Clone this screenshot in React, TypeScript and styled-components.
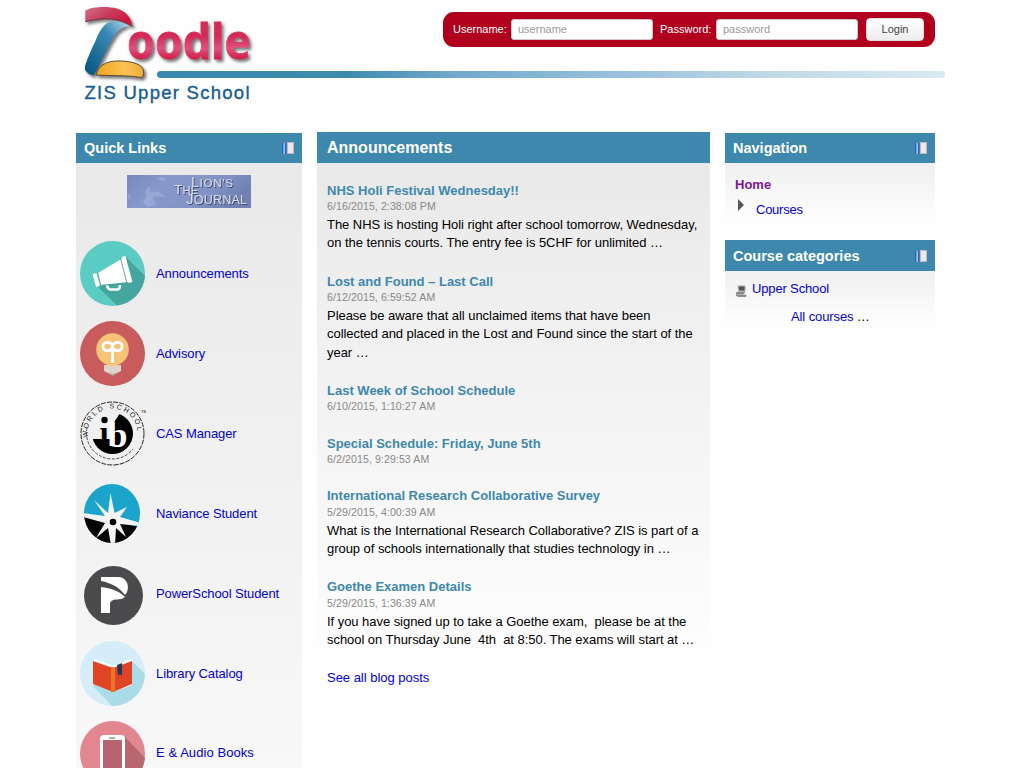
import React from "react";
import styled, { createGlobalStyle } from "styled-components";

const GlobalStyle = createGlobalStyle`
  * { box-sizing: border-box; }
  html, body { margin: 0; height: 768px; overflow: hidden; }
  body {
    background: #fefefe;
    color: #000;
    font: 13px/18.2px "Liberation Sans", Arial, sans-serif;
  }
`;

const Page = styled.div`
  width: 869px;
  height: 768px;
  margin-left: 76px;
  overflow: hidden;
`;

const Header = styled.header`
  display: grid;
  grid-template-columns: 81px 286px 492px 10px;
  grid-template-rows: 71px 7px 54px;
  height: 132px;
`;

const LogoArt = styled.svg`
  grid-area: 1 / 1 / 4 / 3;
  width: 200px;
  height: 110px;
  z-index: 1;
`;

const Rule = styled.div`
  grid-area: 2 / 2 / 3 / 5;
  border-radius: 4px;
  background: linear-gradient(90deg, #3a88ae 0%, #3f8bb0 24%, #70a9cd 38%, #a0c4df 62%, #bdd8e5 76%, #dae9f1 100%);
`;

const LoginBar = styled.form`
  grid-area: 1 / 3 / 2 / 4;
  display: flex;
  align-items: center;
  height: 35px;
  margin-top: 12px;
  padding: 0 11px 0 10px;
  border-radius: 11px;
  background: #b1001e;
  color: #fff;
  font-size: 11px;
`;

const FieldLabel = styled.label<{ $width: number }>`
  width: ${(p) => p.$width}px;
  white-space: nowrap;
`;

const Field = styled.input`
  width: 142px;
  height: 21px;
  margin-right: 7px;
  padding: 0 6px 1px;
  border: 1px solid #d9c5c9;
  border-radius: 3px;
  background: #fff;
  font: 11px "Liberation Sans", Arial, sans-serif;
  &::placeholder { color: #999; }
`;

const LoginButton = styled.button`
  width: 58px;
  height: 23px;
  margin-left: 1px;
  padding: 0 0 1px;
  border: 1px solid #ddd;
  border-radius: 4px;
  background: linear-gradient(#fff, #ececec);
  color: #444;
  font: 11px "Liberation Sans", Arial, sans-serif;
`;

const Columns = styled.div`
  display: grid;
  grid-template-columns: 226px 393px 210px;
  column-gap: 15px;
  align-items: start;
`;

const Side = styled.aside`
  padding-top: 1px;
`;

const Block = styled.section<{ $height: number; $from: string; $to: string }>`
  height: ${(p) => p.$height}px;
  margin-bottom: 17px;
  background: linear-gradient(${(p) => p.$from} 30px, ${(p) => p.$to});
`;

const BlockHead = styled.h2<{ $height: number; $large?: boolean }>`
  display: flex;
  align-items: center;
  justify-content: space-between;
  height: ${(p) => p.$height}px;
  margin: 0;
  padding: 0 7px 0 ${(p) => (p.$large ? 10 : 8)}px;
  background: #3e88ae;
  color: #fff;
  font-size: ${(p) => (p.$large ? "16px" : "14.5px")};
  line-height: 20px;
`;

const DockArt = styled.svg`
  width: 13px;
  height: 14px;
`;

const Journal = styled.svg`
  display: block;
  width: 124px;
  height: 33px;
  margin: 12px 0 26px 51px;
`;

const Link = styled.a`
  color: #0000dd;
  letter-spacing: -0.02px;
`;

const QuickRow = styled.div`
  display: flex;
  align-items: center;
  height: 80px;
  padding-left: 4px;
  ${Link} { letter-spacing: -0.1px; }
  &:last-child ${Link} { margin-bottom: 2px; letter-spacing: 0.07px; }
`;

const QuickArt = styled.svg`
  width: 66px;
  height: 66px;
  margin-right: 10px;
`;

const Posts = styled.div`
  padding: 19px 0 0 10px;
`;

const Post = styled.article`
  margin-bottom: 20px;
`;

const PostTitle = styled.h3`
  margin: 0;
  color: #3e88ae;
  font-size: 13px;
  line-height: 18.2px;
`;

const PostDate = styled.div`
  color: #888;
  font-size: 10.6px;
  line-height: 12.4px;
  padding-bottom: 2px;
  letter-spacing: 0.08px;
`;

const PostText = styled.p`
  margin: 0;
  padding-top: 1.5px;
  padding-bottom: 0.5px;
  letter-spacing: -0.045px;
  white-space: pre;
`;

const NavBody = styled.div`
  padding: 13px 0 0 10px;
`;

const Home = styled.a`
  display: block;
  color: #7e1790;
  font-weight: bold;
`;

const NavItem = styled.div`
  display: flex;
  align-items: flex-start;
  gap: 12px;
  padding: 7px 0 0 3px;
  ${Link} { letter-spacing: -0.25px; }
`;

const Arrow = styled.svg`
  width: 6px;
  height: 12px;
  margin-top: -2px;
`;

const Category = styled.div`
  display: flex;
  align-items: center;
  gap: 5px;
  padding: 9px 0 0 10px;
  ${Link} { letter-spacing: -0.15px; }
`;

const CategoryArt = styled.svg`
  width: 12px;
  height: 12px;
  margin-top: 4px;
`;

const AllCourses = styled.div`
  padding: 10px 0 0 66px;
  letter-spacing: -0.4px;
  ${Link} { letter-spacing: -0.1px; }
`;

function Logo() {
  return (
    <LogoArt viewBox="6 0 200 110">
      <defs>
        <linearGradient id="zr" x2="1" y2=".6"><stop offset="0" stopColor="#d5708a" /><stop offset=".5" stopColor="#c83d5d" /><stop offset="1" stopColor="#d3123d" /></linearGradient>
        <linearGradient id="zb" x1="1" x2="0" y2="1"><stop offset="0" stopColor="#b5dcee" /><stop offset=".35" stopColor="#3c88b4" /><stop offset="1" stopColor="#00527e" /></linearGradient>
        <linearGradient id="zy" x2="1"><stop offset="0" stopColor="#f0a321" /><stop offset=".6" stopColor="#fbc251" /><stop offset="1" stopColor="#ecae39" /></linearGradient>
        <linearGradient id="zo" x2="0" y2="1"><stop offset="0" stopColor="#d42c58" /><stop offset=".45" stopColor="#d42c58" /><stop offset=".62" stopColor="#e0527c" /><stop offset=".78" stopColor="#d11e4b" /><stop offset="1" stopColor="#d31f4d" /></linearGradient>
        <filter id="sh" x="-10%" y="-10%" width="125%" height="130%"><feDropShadow dx="2.2" dy="2.5" stdDeviation="1.6" floodColor="#555" floodOpacity=".8" /></filter>
      </defs>
      <g filter="url(#sh)">
        <path d="M15.3 10.5C22 6.5 38 6 47 8.5C54 10.5 61 16 62.5 26.5C50 18 34 16.5 15.3 21.5Z" fill="url(#zr)" />
        <path d="M15.3 21.8C34 16.5 50 18 62.5 26.5" fill="none" stroke="#713044" strokeWidth="1" />
        <path d="M15 66C18 57 21 50 25 42C29 32 33 25 38 22.5C45 20 53 22 59 26C50 27 46 33 42 40C35 52 30 66 23.5 75.5C20 75 17 73 15 70Z" fill="url(#zb)" />
        <path d="M26 75C29 63 40 60.5 51 61C62 61.5 73 64 73.5 71Q74 77 71 77.5C57 75 42 76 26 75Z" fill="url(#zy)" stroke="#5b4b33" strokeWidth="1" />
        <text x="57" y="59" fontFamily="Noto Sans, sans-serif" fontWeight="700" fontSize="48" textLength="124" lengthAdjust="spacingAndGlyphs" fill="url(#zo)" stroke="url(#zo)" strokeWidth=".8">oodle</text>
      </g>
      <text x="14.5" y="99" fontFamily="Liberation Sans, sans-serif" fontSize="18.5" textLength="165" fill="#155b91" stroke="#155b91" strokeWidth=".35">ZIS Upper School</text>
    </LogoArt>
  );
}

function Dock() {
  return (
    <DockArt viewBox="0 0 13 14">
      <path d="M.5 2V13M3.5 2V13" stroke="#1b62d2" />
      <path d="M2.2 2V13" stroke="#a5c8ed" strokeWidth="1.4" />
      <rect x="5.5" y="1.5" width="6" height="11" fill="#eee9e8" stroke="#c5b5b3" />
    </DockArt>
  );
}

function LionJournal() {
  return (
    <Journal viewBox="0 0 124 33">
      <defs><linearGradient id="jr" x2="1" y2=".3"><stop stopColor="#7988bb" /><stop offset=".35" stopColor="#8799cc" /><stop offset=".75" stopColor="#8292c6" /><stop offset="1" stopColor="#7081b2" /></linearGradient>
        <filter id="jsh"><feDropShadow dx="1" dy="1" stdDeviation=".4" floodColor="#3d4a72" /></filter>
      </defs>
      <rect width="124" height="33" fill="url(#jr)" />
      <path d="M22 11L18 17L20 21L16 27L21 32L29 29L25 24L27 21L38 22L32 17L23 17ZM2 19L4 22L1 24ZM31 4L36 6L39 4L35 2ZM46 25L50 29" fill="#a2b4df" stroke="#9cadd8" strokeWidth=".7" opacity=".6" />
      <g fontFamily="Liberation Sans, sans-serif" fill="#d9dde7" filter="url(#jsh)">
        <text x="64" y="12" fontSize="14" textLength="42">L<tspan fontSize="11.5">ION'S</tspan></text>
        <text x="47" y="19" fontSize="13.5" textLength="24">T<tspan fontSize="11">HE</tspan></text>
        <text x="59" y="29" fontSize="15" textLength="61">J<tspan fontSize="12.5">OURNAL</tspan></text>
      </g>
    </Journal>
  );
}

const icons: Record<string, React.ReactNode> = {
  announcements: <>
    <circle cx="32.5" cy="32.5" r="32.5" fill="#5accc4" />
    <path d="M46 16L65 35A32.5 32.5 0 0 1 37 64.5L17 45Z" fill="#45a59f" />
    <path d="M18 32L43 17L49 41L20 44Z" fill="#fff" />
    <path d="M14.5 32.5L18 45.5M43.5 15.5L50.5 41.5" stroke="#fff" strokeWidth="4" />
    <path d="M17.5 31.5L21 45M40.5 17L47 42.5" stroke="#5a9c98" strokeWidth=".9" />
    <path d="M27 44.5Q28 48.5 31 48.5H37Q40 48.5 40 44" fill="none" stroke="#fff" strokeWidth="2.6" />
  </>,
  advisory: <>
    <circle cx="32.5" cy="32.5" r="32.5" fill="#c85b5c" />
    <path d="M24 44H41V50L32.5 54.5L24 50Z" fill="#ded4c8" />
    <path d="M26 51L32.5 54.5L39 51L32.5 53Z" fill="#b5a79b" />
    <circle cx="32.5" cy="28.5" r="16.3" fill="#f5c477" />
    <path d="M32.5 42V25C31 20 23 20 23 25.5C23 31 31 31 32.5 26C34 31 42 31 42 25.5C42 20 34 20 32.5 25" fill="none" stroke="#fff" strokeWidth="2.8" />
  </>,
  cas: <>
    <defs><path id="ring" d="M32.5 57.5A25 25 0 1 1 32.6 57.5" /></defs>
    <circle cx="32.5" cy="32.5" r="31.5" fill="none" stroke="#222" strokeWidth="1" strokeDasharray="5 1.2" />
    <path d="M7 27A26 26 0 0 0 53 48" fill="none" stroke="#222" strokeWidth=".8" strokeDasharray="3 1.5" />
    <circle cx="32.5" cy="32.5" r="20.5" fill="#000" />
    <path d="M40 12L33 23V38H11V22L20 12Z" fill="#f1f1f1" />
    <circle cx="24.5" cy="19" r="3.2" fill="#000" />
    <text x="19.5" y="43" fontFamily="Liberation Serif, serif" fontWeight="bold" fontSize="33" fill="#000">ı</text>
    <path d="M14 38H27L29 47H18Z" fill="#000" />
    <text x="27.5" y="46" fontFamily="Liberation Serif, serif" fontWeight="bold" fontSize="36" fill="#fff">b</text>
    <text fontFamily="Liberation Sans, sans-serif" fontSize="7" fill="#222" textLength="80"><textPath href="#ring" startOffset="35">WORLD SCHOOL</textPath></text>
    <text x="61" y="12" fontSize="4" fontFamily="Liberation Sans, sans-serif">TM</text>
  </>,
  naviance: <>
    <defs><clipPath id="nv"><ellipse cx="32" cy="32.5" rx="28" ry="29.5" /></clipPath></defs>
    <g clipPath="url(#nv)">
      <path d="M4 0H60V47L4 35Z" fill="#1ca5cc" />
      <path d="M4 35L60 46V66H4Z" fill="#050505" />
      <path d="M30.5 12L34.5 32L47 26L40 36L61 42V45L40 43L46 56L36 47L35 64H31L28 47L16 57L25 42L3 36V32L25 35L14 19L28 32Z" fill="#f4f4f4" />
    </g>
    <circle cx="33" cy="41" r="3.3" fill="#000" />
  </>,
  powerschool: <>
    <circle cx="33.5" cy="34.5" r="29.5" fill="#4b4b4d" />
    <path d="M21 16H38C46 16 50 24 47 31L45 34C39 26 31 22 21 20Z" fill="#fff" />
    <path d="M21 26C31 27 39 30 45 36Q42 38.5 37 38.5Q30 38.5 30 43V52H21Z" fill="#fff" />
  </>,
  library: <>
    <circle cx="32.5" cy="32.5" r="32.5" fill="#d4edf8" />
    <path d="M52 20L65 33A32.5 32.5 0 0 1 32 65L13 45Z" fill="#a9dbe9" />
    <path d="M13 19L16 18L33 25L50 18L52 20V44L33 51L13 43Z" fill="#fff" />
    <path d="M13 20L33 27L52 20V43L33 51L13 43Z" fill="#df4525" />
    <path d="M31 26H35V51H31Z" fill="#ef7429" />
    <path d="M37 24L42 22V35L40 33L38 35Z" fill="#1c3a5b" />
  </>,
  books: <>
    <circle cx="32.5" cy="32.5" r="32.5" fill="#e28790" />
    <path d="M44 15L65 37A32.5 32.5 0 0 1 45 64V53Z" fill="#b8666f" />
    <rect x="20" y="14" width="25" height="47" rx="4" fill="#fff" />
    <rect x="23" y="19" width="19" height="34" fill="#b8656f" />
    <path d="M29 17H35" stroke="#666" />
  </>,
};

const quickLinks = [
  ["announcements", "Announcements"],
  ["advisory", "Advisory"],
  ["cas", "CAS Manager"],
  ["naviance", "Naviance Student"],
  ["powerschool", "PowerSchool Student"],
  ["library", "Library Catalog"],
  ["books", "E & Audio Books"],
];

const posts = [
  { title: "NHS Holi Festival Wednesday!!", date: "6/16/2015, 2:38:08 PM", text: "The NHS is hosting Holi right after school tomorrow, Wednesday,\non the tennis courts. The entry fee is 5CHF for unlimited …" },
  { title: "Lost and Found – Last Call", date: "6/12/2015, 6:59:52 AM", text: "Please be aware that all unclaimed items that have been\ncollected and placed in the Lost and Found since the start of the\nyear …" },
  { title: "Last Week of School Schedule", date: "6/10/2015, 1:10:27 AM" },
  { title: "Special Schedule: Friday, June 5th", date: "6/2/2015, 9:29:53 AM" },
  { title: "International Research Collaborative Survey", date: "5/29/2015, 4:00:39 AM", text: "What is the International Research Collaborative? ZIS is part of a\ngroup of schools internationally that studies technology in …" },
  { title: "Goethe Examen Details", date: "5/29/2015, 1:36:39 AM", text: "If you have signed up to take a Goethe exam,  please be at the\nschool on Thursday June  4th  at 8:50. The exams will start at …" },
];

export default function App() {
  return (
    <Page>
      <GlobalStyle />
      <Header>
        <Logo />
        <LoginBar>
          <FieldLabel $width={58}>Username:</FieldLabel>
          <Field placeholder="username" />
          <FieldLabel $width={56}>Password:</FieldLabel>
          <Field type="password" placeholder="password" />
          <LoginButton type="button">Login</LoginButton>
        </LoginBar>
        <Rule />
      </Header>
      <Columns>
        <Side>
          <Block $height={720} $from="#e9e9e9" $to="#fafafa">
            <BlockHead $height={30}>Quick Links<Dock /></BlockHead>
            <LionJournal />
            {quickLinks.map(([id, label]) => (
              <QuickRow key={id}>
                <QuickArt viewBox="0 0 66 66">{icons[id]}</QuickArt>
                <Link>{label}</Link>
              </QuickRow>
            ))}
          </Block>
        </Side>
        <Block as="main" $height={514} $from="#e9e9e9" $to="#fdfdfd">
          <BlockHead $height={31} $large>Announcements</BlockHead>
          <Posts>
            {posts.map((post) => (
              <Post key={post.title}>
                <PostTitle>{post.title}</PostTitle>
                <PostDate>{post.date}</PostDate>
                {post.text && <PostText>{post.text}</PostText>}
              </Post>
            ))}
            <Link>See all blog posts</Link>
          </Posts>
        </Block>
        <Side>
          <Block $height={90} $from="#f0f0f0" $to="#fefefe">
            <BlockHead $height={30}>Navigation<Dock /></BlockHead>
            <NavBody>
              <Home>Home</Home>
              <NavItem>
                <Arrow viewBox="0 0 6 12"><path d="M0 0L6 6L0 12Z" fill="#555" /></Arrow>
                <Link>Courses</Link>
              </NavItem>
            </NavBody>
          </Block>
          <Block $height={85} $from="#f0f0f0" $to="#fefefe">
            <BlockHead $height={31}>Course categories<Dock /></BlockHead>
            <Category>
              <CategoryArt viewBox="0 0 12 12">
                <path d="M3 1H10V6H4Z" fill="#555" stroke="#aaa" />
                <path d="M2 7H10L8 9H1ZM1 10H11V11.5H3Z" fill="#999" stroke="#666" strokeWidth=".6" />
              </CategoryArt>
              <Link>Upper School</Link>
            </Category>
            <AllCourses><Link>All courses</Link> …</AllCourses>
          </Block>
        </Side>
      </Columns>
    </Page>
  );
}
